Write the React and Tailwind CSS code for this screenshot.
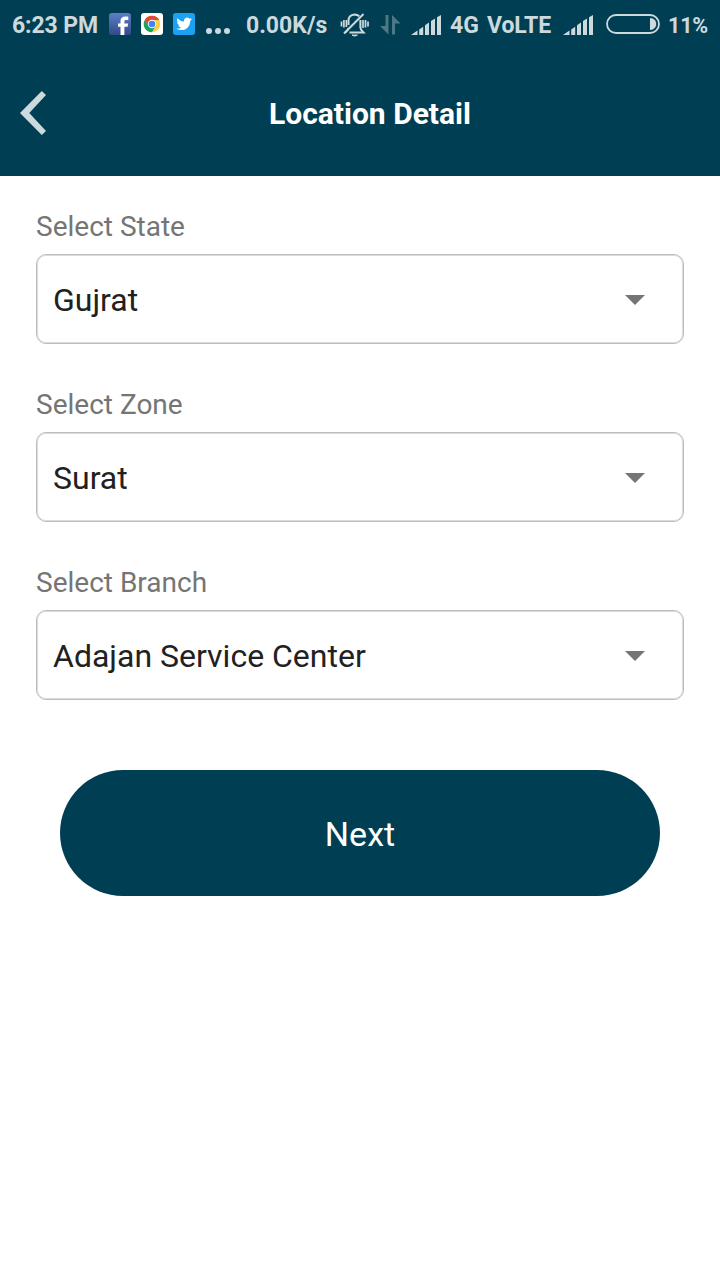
import React from "react";

function Signal({ className }) {
  return (
    <svg className={className} width="31" height="20" viewBox="0 0 31 20" fill="#ccd9dd">
      <path d="M0 20 L6.5 15.6 V20Z M8.2 14.4 L12.2 11.800 V20H8.200Z M14 10.200 L18 7.600 V20h-4Z M20 6 L24 3.600 V20h-4Z M26 2.200 L30 0 V20H26Z" />
    </svg>
  );
}

function StatusBar() {
  return (
    <div className="flex h-[50px] items-center whitespace-nowrap text-[23px] font-bold leading-[50px] text-[#ccd9dd]">
      <span className="ml-[12px] w-[97px] pt-[2px] tracking-[-0.1px]">6:23 PM</span>
      <svg className="-mt-[2px] mr-[10px]" width="22" height="22" viewBox="0 0 22 22">
        <defs>
          <linearGradient id="fb" x1="0" y1="0" x2="0" y2="1">
            <stop offset="0" stopColor="#5b7fc7" />
            <stop offset="1" stopColor="#314a87" />
          </linearGradient>
        </defs>
        <rect width="22" height="22" rx="3" fill="url(#fb)" />
        <path d="M11.500 22v-8.300H9v-3.300h2.500V8.100c0-3 1.800-4.600 4.800-4.600 1.400 0 2.400.1 3 .2v3.200h-2c-1.500 0-1.900.7-1.900 1.700v1.800h3.700l-.5 3.300h-3.200V22Z" fill="#fff" />
      </svg>
      <svg className="-mt-[2px] mr-[10px]" width="22" height="22" viewBox="0 0 22 22">
        <rect width="22" height="22" rx="3" fill="#fff" />
        <circle cx="11" cy="11" r="8.3" fill="#ffce43" />
        <path d="M3.8 6.9A8.3 8.3 0 0 1 18.2 6.9H11L7.4 13.1Z" fill="#dc4a3e" />
        <path d="M3.8 6.9A8.3 8.3 0 0 0 11 19.3L14.6 13.1H7.4Z" fill="#1ba160" />
        <circle cx="11" cy="11" r="4.2" fill="#fff" />
        <circle cx="11" cy="11" r="3.3" fill="#4285f4" />
      </svg>
      <svg className="-mt-[2px] mr-[11px]" width="22" height="22" viewBox="0 0 22 22">
        <rect width="22" height="22" rx="3" fill="#1da1f2" />
        <path transform="translate(3.4 3.2) scale(.64)" fill="#fff" d="M23.95 4.57a10 10 0 0 1-2.83.77 4.96 4.96 0 0 0 2.17-2.72c-.95.55-2 .95-3.13 1.18a4.92 4.92 0 0 0-8.38 4.48A13.9 13.9 0 0 1 1.64 3.16a4.92 4.92 0 0 0 1.52 6.57 4.9 4.9 0 0 1-2.23-.61v.06a4.92 4.92 0 0 0 3.95 4.83 5 5 0 0 1-2.21.08 4.94 4.94 0 0 0 4.6 3.42A9.87 9.87 0 0 1 0 19.54a14 14 0 0 0 7.55 2.21c9.05 0 14-7.5 14-13.98 0-.21 0-.42-.02-.63a9.94 9.94 0 0 0 2.46-2.55Z" />
      </svg>
      <svg className="mt-[12px] mr-[16px]" width="24" height="6" viewBox="0 0 24 6" fill="#ccd9dd">
        <circle cx="3" cy="3" r="3" />
        <circle cx="12" cy="3" r="3" />
        <circle cx="21" cy="3" r="3" />
      </svg>
      <span className="w-[94px] pt-[2px]">0.00K/s</span>
      <svg className="mr-[10px] -mt-[2px]" width="30" height="27" viewBox="0 0 30 27" fill="none" stroke="#ccd9dd" strokeWidth="2">
        <path d="M1.500 10.500v5M3.900 9v7.500M6.400 9v7M23 9v8M25.500 9v7.500M28 10.500v5" strokeWidth="1.700" />
        <path d="M8.500 14V9.500C8.500 6.200 10.800 3.600 14.400 3.400c2 0 3.800.7 4.900 2M20.400 9V16.500c0 2.300 1.700 3.300 3.200 5H9.500M5.200 21.500c1.700-1.500 3.200-2.500 3.300-4.500" />
        <path d="M23.500 3 4 22.500" />
        <path d="M12 24.100q2.700 2 5.400 0Z" fill="#ccd9dd" strokeWidth="1" />
      </svg>
      <svg className="mr-[11px]" width="20" height="20" viewBox="0 0 20 20" fill="#4d7885">
        <path d="M5.5 0H8.5V19.5L0 11H5.5Z M12 19.5V0L20.5 8.5H15V19.5Z" />
      </svg>
      <Signal className="-mt-[1px] mr-[8px]" />
      <span className="w-[37px] pt-[2px]">4G</span>
      <span className="w-[76px] pt-[2px] tracking-[-0.1px]">VoLTE</span>
      <Signal className="-mt-[1px] mr-[12px]" />
      <svg className="-mt-[2px] mr-[8px]" width="54" height="20" viewBox="0 0 54 20">
        <rect x="1" y="1" width="52" height="18" rx="9" fill="none" stroke="#ccd9dd" strokeWidth="1.8" />
        <path d="M44 4c4 .2 6.200 2.800 6.200 6S48 15.800 44 16Z" fill="#ccd9dd" />
      </svg>
      <span className="pt-[1px] text-[21.500px] tracking-[-0.2px]">11%</span>
    </div>
  );
}

function Field({ label, value }) {
  return (
    <div className="h-[178px]">
      <div className="h-[46px] pt-[1px] text-[28px] leading-[36px] text-[#757575]">{label}</div>
      <div className="flex h-[90px] items-center justify-between rounded-[10px] border border-[#bdbdbd] pl-[16px] pr-[38px] pt-[2px] text-[32px] text-[#212121] shadow-[inset_0_0_0_1px_#dcdcdc]">
        <span>{value}</span>
        <svg width="20" height="10" viewBox="0 0 20 10" fill="#757575">
          <path d="M0 0H20L10 10Z" />
        </svg>
      </div>
    </div>
  );
}

export default function App() {
  return (
    <div className="h-[1280px] w-[720px] overflow-hidden bg-white font-['Roboto',sans-serif]">
      <header className="h-[176px] bg-[#003f53]">
        <StatusBar />
        <div className="flex h-[126px] items-center">
          <svg className="ml-[20px]" width="26" height="44" viewBox="0 0 26 44" fill="#ccd9dd">
            <path d="M21.800 0 26 4 9.300 22 26 40 21.800 44 0 22Z" />
          </svg>
          <h1 className="ml-[223px] whitespace-nowrap pt-[2px] text-[30px] font-bold leading-[36px] text-white">
            Location Detail
          </h1>
        </div>
      </header>
      <main className="px-[36px] pt-[32px]">
        <Field label="Select State" value="Gujrat" />
        <Field label="Select Zone" value="Surat" />
        <Field label="Select Branch" value="Adajan Service Center" />
        <button className="mx-[24px] mt-[28px] block h-[126px] w-[600px] rounded-full bg-[#003f53] pt-[2px] text-[34px] text-white">
          Next
        </button>
      </main>
    </div>
  );
}
